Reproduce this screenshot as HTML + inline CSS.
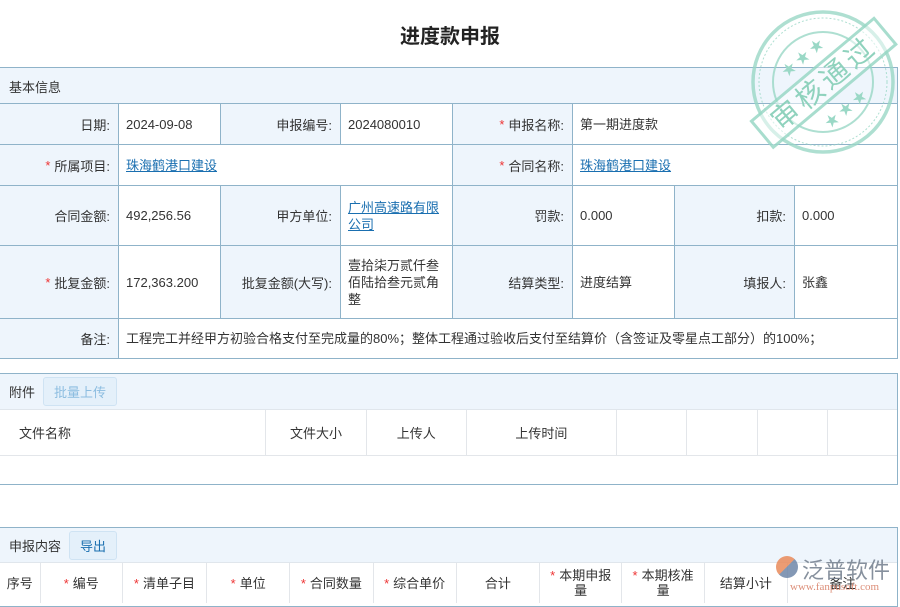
<!DOCTYPE html>
<html><head><meta charset="utf-8"><style>
body{margin:0;width:900px;height:600px;overflow:hidden;background:#fff;font-family:"Liberation Sans","Noto Sans CJK SC",sans-serif;font-size:13px;color:#333;position:relative}
.a{position:absolute;box-sizing:border-box}
.l{background:#eef5fc;text-align:right;padding-right:8px;display:flex;align-items:center;justify-content:flex-end;border-right:1px solid #8fb3c9;border-bottom:1px solid #8fb3c9}
.v{background:#fff;padding-left:7px;display:flex;align-items:center;border-right:1px solid #8fb3c9;border-bottom:1px solid #8fb3c9;line-height:17px}
.r{color:#e33;margin-right:4px}
a{color:#1a6fb0;text-decoration:underline}
.h{display:flex;align-items:center;justify-content:center;border-right:1px solid #e3e6ea;height:100%}
</style></head><body>
<div class="a" style="left:0;top:20px;width:900px;text-align:center;font-size:20px;font-weight:bold;color:#222">进度款申报</div>
<div class="a" style="left:0;top:67px;width:898px;height:292px;border:1px solid #8fb3c9;border-bottom:none;border-right:none"></div>
<div class="a" style="left:0;top:67px;width:898px;height:37px;background:#eef5fc;border-top:1px solid #8fb3c9;border-bottom:1px solid #8fb3c9;border-right:1px solid #8fb3c9;padding:9px 9px">基本信息</div>
<div class="a l" style="left:0;top:104px;width:119px;height:41px">日期:</div>
<div class="a v" style="left:119px;top:104px;width:102px;height:41px">2024-09-08</div>
<div class="a l" style="left:221px;top:104px;width:120px;height:41px">申报编号:</div>
<div class="a v" style="left:341px;top:104px;width:112px;height:41px">2024080010</div>
<div class="a l" style="left:453px;top:104px;width:120px;height:41px"><span class="r">*</span>申报名称:</div>
<div class="a v" style="left:573px;top:104px;width:325px;height:41px">第一期进度款</div>
<div class="a l" style="left:0;top:145px;width:119px;height:41px"><span class="r">*</span>所属项目:</div>
<div class="a v" style="left:119px;top:145px;width:334px;height:41px"><a>珠海鹤港口建设</a></div>
<div class="a l" style="left:453px;top:145px;width:120px;height:41px"><span class="r">*</span>合同名称:</div>
<div class="a v" style="left:573px;top:145px;width:325px;height:41px"><a>珠海鹤港口建设</a></div>
<div class="a l" style="left:0;top:186px;width:119px;height:60px">合同金额:</div>
<div class="a v" style="left:119px;top:186px;width:102px;height:60px">492,256.56</div>
<div class="a l" style="left:221px;top:186px;width:120px;height:60px">甲方单位:</div>
<div class="a v" style="left:341px;top:186px;width:112px;height:60px;padding-right:8px"><a>广州高速路有限公司</a></div>
<div class="a l" style="left:453px;top:186px;width:120px;height:60px">罚款:</div>
<div class="a v" style="left:573px;top:186px;width:102px;height:60px">0.000</div>
<div class="a l" style="left:675px;top:186px;width:120px;height:60px">扣款:</div>
<div class="a v" style="left:795px;top:186px;width:103px;height:60px">0.000</div>
<div class="a l" style="left:0;top:246px;width:119px;height:73px"><span class="r">*</span>批复金额:</div>
<div class="a v" style="left:119px;top:246px;width:102px;height:73px">172,363.200</div>
<div class="a l" style="left:221px;top:246px;width:120px;height:73px">批复金额(大写):</div>
<div class="a v" style="left:341px;top:246px;width:112px;height:73px;padding-right:8px">壹拾柒万贰仟叁佰陆拾叁元贰角整</div>
<div class="a l" style="left:453px;top:246px;width:120px;height:73px">结算类型:</div>
<div class="a v" style="left:573px;top:246px;width:102px;height:73px">进度结算</div>
<div class="a l" style="left:675px;top:246px;width:120px;height:73px">填报人:</div>
<div class="a v" style="left:795px;top:246px;width:103px;height:73px">张鑫</div>
<div class="a l" style="left:0;top:319px;width:119px;height:40px">备注:</div>
<div class="a v" style="left:119px;top:319px;width:779px;height:40px">工程完工并经甲方初验合格支付至完成量的80%；整体工程通过验收后支付至结算价（含签证及零星点工部分）的100%；</div>
<svg class="a" style="left:748px;top:10px" width="150" height="150" viewBox="0 0 150 150">
<g fill="none" stroke="#9ad8c6" opacity="0.8">
<circle cx="75" cy="72" r="70" stroke-width="3.5"/>
<circle cx="75" cy="72" r="64" stroke-width="1" stroke-dasharray="2 2"/>
<circle cx="75" cy="72" r="50" stroke-width="2"/>
</g>
<g transform="rotate(-40 75 72)">
<rect x="-5" y="56" width="160" height="34" fill="#fff" fill-opacity="0.6" stroke="#9ad8c6" stroke-width="3" opacity="0.85"/>
<text x="75" y="83" text-anchor="middle" font-size="28" fill="#8fd2bd" font-family="Noto Sans CJK SC,sans-serif" letter-spacing="4">审核通过</text>
<text x="75" y="45" text-anchor="middle" font-size="14" fill="#9ad8c6">★ ★ ★</text>
<text x="75" y="112" text-anchor="middle" font-size="14" fill="#9ad8c6">★ ★ ★</text>
</g>
</svg>
<div class="a" style="left:0;top:373px;width:898px;height:112px;border:1px solid #8fb3c9;border-left:none"></div>
<div class="a" style="left:0;top:374px;width:897px;height:36px;background:#eef5fc;border-bottom:1px solid #e0e6ec;display:flex;align-items:center;padding-left:9px">附件<span style="margin-left:8px;border:1px solid #cfe3f3;background:#e4f0fa;color:#8cbde0;border-radius:3px;padding:4px 10px">批量上传</span></div>
<div class="a" style="left:0;top:410px;width:897px;height:46px;border-bottom:1px solid #e3e6ea;display:flex">
<div class="h" style="width:268px;justify-content:flex-start;padding-left:19px;box-sizing:border-box">文件名称</div>
<div class="h" style="width:100px">文件大小</div>
<div class="h" style="width:100px">上传人</div>
<div class="h" style="width:150px">上传时间</div>
<div class="h" style="width:70px"></div><div class="h" style="width:70px"></div><div class="h" style="width:70px"></div><div class="h" style="width:69px;border:none"></div>
</div>
<div class="a" style="left:0;top:527px;width:898px;height:80px;border:1px solid #8fb3c9;border-left:none"></div>
<div class="a" style="left:0;top:528px;width:897px;height:35px;background:#eef5fc;border-bottom:1px solid #e0e6ec;display:flex;align-items:center;padding-left:9px">申报内容<span style="margin-left:8px;border:1px solid #cfe3f3;background:#e4f0fa;color:#1a6fb0;border-radius:3px;padding:4px 10px">导出</span></div>
<div class="a" style="left:0;top:563px;width:897px;height:40px;display:flex;line-height:15px;text-align:center">
<div class="h" style="width:40px">序号</div>
<div class="h" style="width:82px"><span class="r">*</span>编号</div>
<div class="h" style="width:84px"><span class="r">*</span>清单子目</div>
<div class="h" style="width:83px"><span class="r">*</span>单位</div>
<div class="h" style="width:83px"><span class="r">*</span>合同数量</div>
<div class="h" style="width:83px"><span class="r">*</span>综合单价</div>
<div class="h" style="width:83px">合计</div>
<div class="h" style="width:83px;padding:0 10px;box-sizing:border-box"><span><span class="r">*</span>本期申报量</span></div>
<div class="h" style="width:83px;padding:0 10px;box-sizing:border-box"><span><span class="r">*</span>本期核准量</span></div>
<div class="h" style="width:83px">结算小计</div>
<div class="h" style="width:110px;border:none">备注</div>
</div>
<div class="a" style="left:802px;top:553px;width:100px;font-size:22px;color:#7a8593;opacity:.9">泛普软件</div>
<div class="a" style="left:776px;top:556px;width:22px;height:22px;border-radius:50%;background:linear-gradient(135deg,#e98a5a 50%,#6d86a8 50%);opacity:.85"></div>
<div class="a" style="left:790px;top:581px;font-size:11px;color:#d9826a;font-family:'Liberation Serif',serif;opacity:.9">www.fanpusoft.com</div>
</body></html>
